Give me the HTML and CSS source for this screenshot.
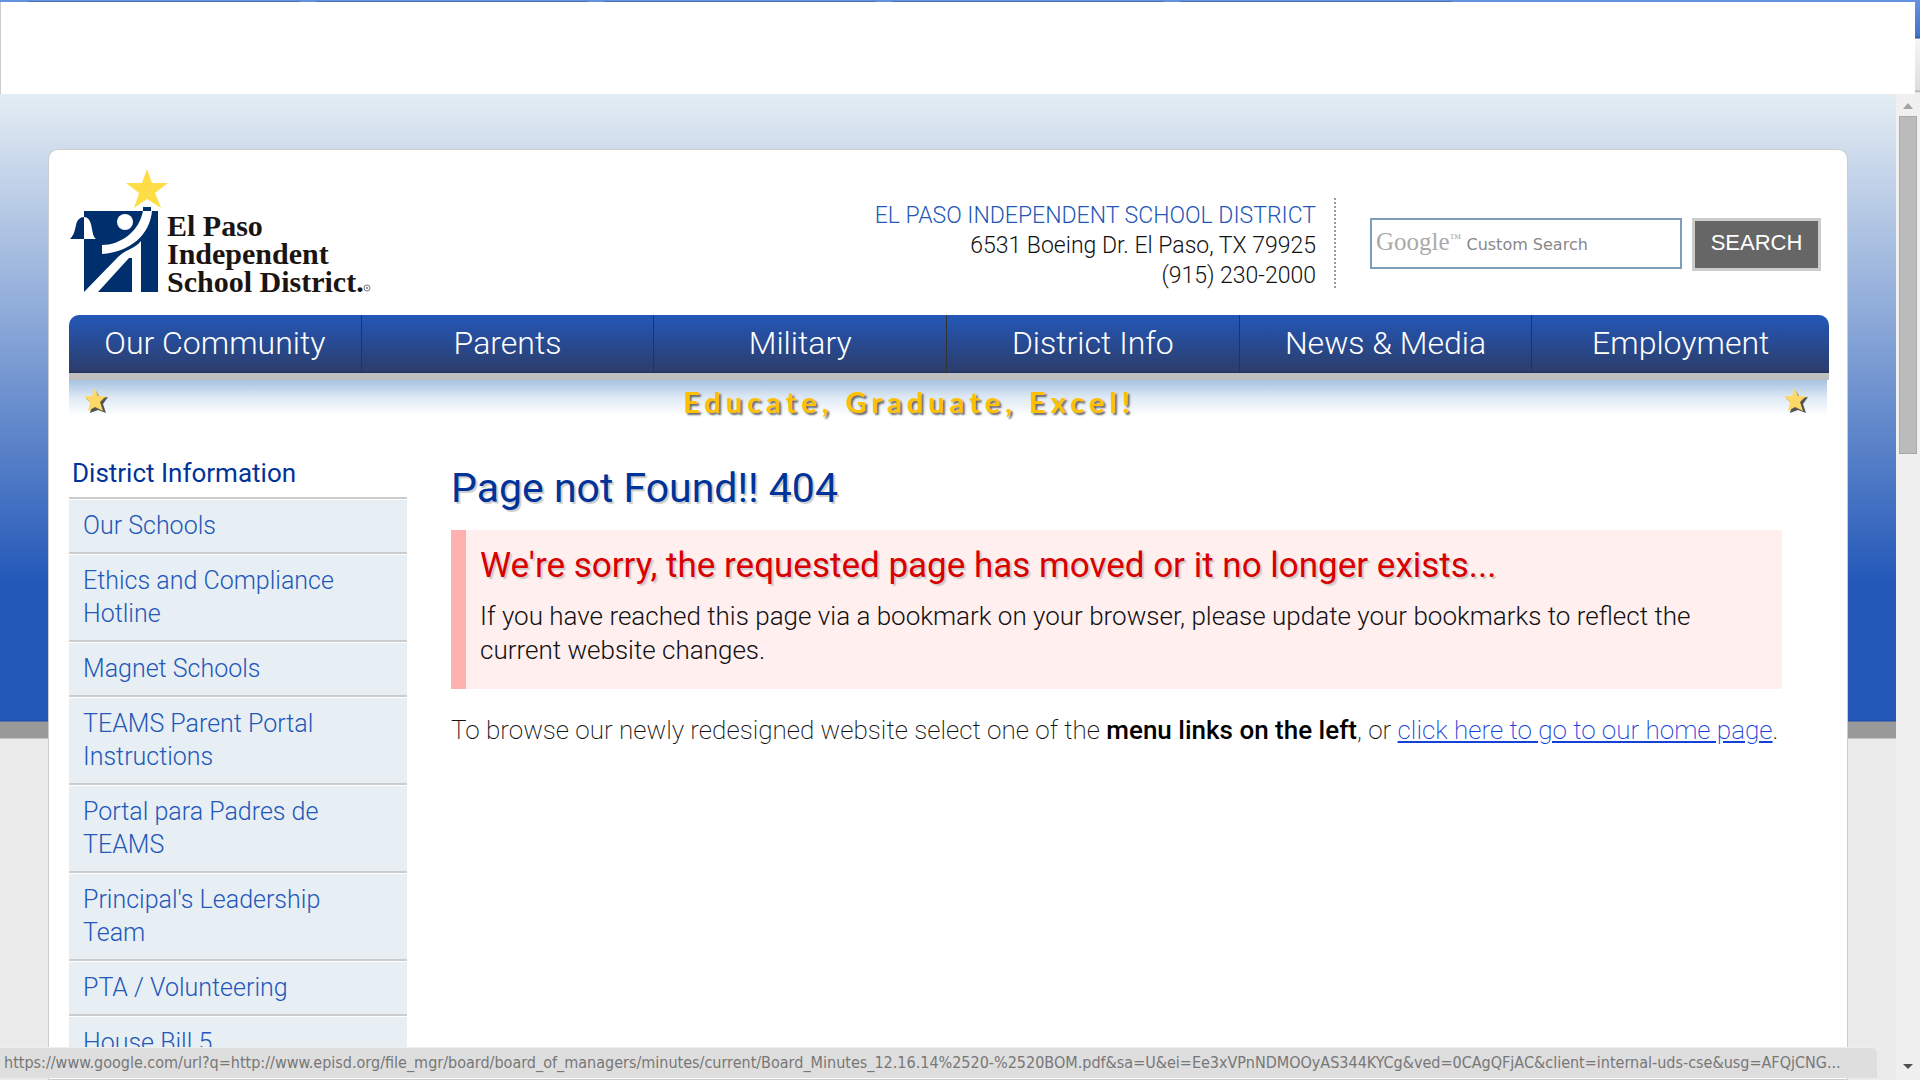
FILE: index.html
```
<!DOCTYPE html>
<html lang="en">
<head>
    <meta charset="UTF-8">
    <meta name="viewport" content="width=device-width, initial-scale=1.0">
    <title>Page not Found - El Paso Independent School District</title>
    <link rel="stylesheet" href="styles.css">
</head>
<body>
<div class="topbar">
    <div class="tabs"><span></span><span></span><span></span><span></span><span></span></div>
    <div class="topbar-row">
        <div class="blank"></div>
        <div class="edge"></div>
    </div>
</div>

<div class="window">
    <div class="page">
        <div class="container">
            <header class="header">
                <a href="#" class="logo" aria-label="El Paso Independent School District">
                    <svg width="310" height="134" viewBox="-1 0 310 134">
                        <path fill="#002f6e" d="M14 42h74v81H14z"/>
                        <path fill="#ffdd47" d="M77 0l5 14h16L85 24l6 15-14-9-13 9 5-15L56 14h16z"/>
                        <path fill="#002f6e" d="M0 70c4-4 5-9 6-14 1-5 4-8 8-8v22z"/>
                        <path fill="#fff" d="M14 48c5 0 7 5 8 12 1 5 1 7 4 10H14z"/>
                        <circle cx="55" cy="53" r="8" fill="#fff"/>
                        <path fill="#fff" d="M32 76c18 0 37-13 41-34h9c-2 23-21 41-50 43z"/>
                        <path fill="#002f6e" d="M73 38h8v4h-8z"/>
                        <path fill="#fff" d="M14 123l34-35c8-8 17-8 23-16v51h-9V89h-3l-31 34z"/>
                        <g class="logo-text">
                            <text x="97" y="67">El Paso</text>
                            <text x="97" y="95">Independent</text>
                            <text x="97" y="123">School District.</text>
                        </g>
                        <circle cx="297" cy="119" r="3" fill="none" stroke="#777"/>
                        <circle cx="297" cy="119" r="1" fill="#777"/>
                    </svg>
                </a>
                <div class="address">
                    <a href="#">EL PASO INDEPENDENT SCHOOL DISTRICT</a><br>
                    6531 Boeing Dr. El Paso, TX 79925<br>
                    (915) 230-2000
                </div>
                <form class="search">
                    <div class="search-box">
                        <input type="text" id="q" aria-label="Search">
                        <label for="q"><span class="google">Google<sup>™</sup></span> Custom Search</label>
                    </div>
                    <button type="button">SEARCH</button>
                </form>
            </header>

            <nav class="nav">
                <a href="#">Our Community</a>
                <a href="#">Parents</a>
                <a href="#">Military</a>
                <a href="#">District Info</a>
                <a href="#">News &amp; Media</a>
                <a href="#">Employment</a>
            </nav>

            <div class="tagline">
                <svg class="star" width="26" height="26" viewBox="0 0 26 26">
                    <path fill="#555" d="M13 3l4 7 8-1-5 7 3 9-8-3-8 3 2-9-6-6 7-1z"/>
                    <path fill="#ffd966" d="M12 0l3 8 8 0-6 6 3 9-8-4-7 4 2-9-6-6 8 0z"/>
                </svg>
                <span>Educate, Graduate, Excel!</span>
                <svg class="star" width="26" height="26" viewBox="0 0 26 26">
                    <path fill="#555" d="M13 3l4 7 8-1-5 7 3 9-8-3-8 3 2-9-6-6 7-1z"/>
                    <path fill="#ffd966" d="M12 0l3 8 8 0-6 6 3 9-8-4-7 4 2-9-6-6 8 0z"/>
                </svg>
            </div>

            <div class="columns">
                <aside class="sidebar">
                    <h3>District Information</h3>
                    <ul>
                        <li><a href="#">Our Schools</a></li>
                        <li><a href="#">Ethics and Compliance Hotline</a></li>
                        <li><a href="#">Magnet Schools</a></li>
                        <li><a href="#">TEAMS Parent Portal Instructions</a></li>
                        <li><a href="#">Portal para Padres de TEAMS</a></li>
                        <li><a href="#">Principal's Leadership Team</a></li>
                        <li><a href="#">PTA / Volunteering</a></li>
                        <li><a href="#">House Bill 5</a></li>
                    </ul>
                </aside>
                <main class="content">
                    <h1>Page not Found!! 404</h1>
                    <div class="alert">
                        <h2>We're sorry, the requested page has moved or it no longer exists...</h2>
                        <p>If you have reached this page via a bookmark on your browser, please update your bookmarks to reflect the current website changes.</p>
                    </div>
                    <p class="browse">To browse our newly redesigned website select one of the <strong>menu links on the left</strong>, or <a href="#">click here to go to our home page</a>.</p>
                </main>
            </div>
        </div>
    </div>

    <div class="scrollbar">
        <svg width="24" height="22" viewBox="0 0 24 22"><path fill="#a3a3a3" d="M7 15h10l-5-6z"/></svg>
        <div class="thumb"></div>
        <svg width="24" height="22" viewBox="0 0 24 22"><path fill="#505050" d="M7 6h10l-5 5z"/></svg>
    </div>
</div>

<div class="status">https://www.google.com/url?q=http://www.episd.org/file_mgr/board/board_of_managers/minutes/current/Board_Minutes_12.16.14%2520-%2520BOM.pdf&amp;sa=U&amp;ei=Ee3xVPnNDMOOyAS344KYCg&amp;ved=0CAgQFjAC&amp;client=internal-uds-cse&amp;usg=AFQjCNG...</div>
</body>
</html>
```
FILE: styles.css
```
* { box-sizing: border-box; }
body {
    margin: 0;
    height: 100vh;
    overflow: hidden;
    display: flex;
    flex-direction: column;
    font-family: Roboto, Arial, sans-serif;
    font-weight: 300;
    font-size: 26px;
    line-height: 34px;
    color: #111;
}
a { color: #2358b8; text-decoration: none; }
h1, h2, h3, p, ul { margin: 0; padding: 0; }
h1, h2, h3 { font-weight: 400; }

/* Browser chrome */
.topbar { height: 94px; display: flex; flex-direction: column; background: #fff; }
.tabs { height: 2px; background: #6492e0; display: flex; gap: 16px; padding-left: 28px; }
.tabs span { width: 272px; border-bottom: 1px solid #4a72b4; }
.topbar-row { flex: 1; display: flex; border-left: 1px solid #ccc; }
.blank { flex: 1; }
.edge {
    width: 5px;
    background: linear-gradient(#6492e0, #4273cc 34px, #2a50a0 36px, #f6f6f6 37px, #ddd 88px, #aaa 89px, #f0f0f0 91px);
}
.window { flex: 1; min-height: 0; display: flex; }
.scrollbar {
    width: 24px;
    background: #f0f0f0;
    display: flex;
    flex-direction: column;
}
.scrollbar svg { display: block; flex: none; }
.thumb { width: 18px; height: 338px; margin: 0 3px auto; background: #bbb; border: 1px solid #a8a8a8; }

.page {
    flex: 1;
    overflow: hidden;
    padding: 55px 48px 0;
    background: linear-gradient(#e4edf3, #2358b8 490px, #2358b8 626px, #1d4fb0 627px, #999 628px, #999 644px, #ebebeb 645px);
}
.container {
    min-height: 100%;
    padding: 19px 20px 0;
    background: #fff;
    border: 1px solid #ccc;
    border-radius: 10px 10px 0 0;
}

.header { display: flex; align-items: flex-start; height: 146px; padding-right: 6px; }
.logo { margin-right: auto; }
.logo svg { display: block; }
.logo-text { font: bold 30px "Liberation Serif", serif; fill: #1a1412; }
.address {
    margin-top: 29px;
    height: 90px;
    padding: 3px 18px 0 0;
    border-right: 2px dotted #999;
    font-size: 23px;
    line-height: 30px;
    text-align: right;
}
.search { display: flex; gap: 10px; margin: 49px 0 0 34px; }
.search-box { display: grid; width: 312px; height: 51px; }
.search-box input, .search-box label { grid-area: 1 / 1; }
.search-box input { min-width: 0; border: 2px solid #7e9db9; background: #fff; }
.search-box label {
    padding-left: 6px;
    line-height: 48px;
    font-family: "DejaVu Sans", sans-serif;
    font-size: 16px;
    font-weight: 400;
    color: #888;
    pointer-events: none;
    white-space: nowrap;
}
.google { font-family: "Liberation Serif", serif; font-size: 25px; color: #aaa; }
.google sup { font-size: 12px; line-height: 0; vertical-align: 8px; }
.search button {
    width: 129px;
    height: 53px;
    padding: 0 0 4px;
    border: 3px solid #ccc;
    background: #666;
    color: #fff;
    font-family: "Liberation Sans", Arial, sans-serif;
    font-size: 22px;
}

.nav {
    display: flex;
    height: 65px;
    margin-right: -2px;
    border-bottom: 7px solid #bfbfbf;
    border-radius: 10px 10px 0 0;
    background: linear-gradient(#2358b8, #2c3d6c 56px, #22325f);
}
.nav a {
    flex: 1;
    color: #fff;
    font-size: 32px;
    line-height: 56px;
    text-align: center;
    border-right: 1px solid #333;
}
.nav a:last-child { flex-basis: 5px; border-right: 0; }

.tagline {
    display: flex;
    align-items: flex-start;
    height: 74px;
    padding: 8px 18px 0 14px;
    background: linear-gradient(#a5c3e2, #e0eaf5 18px, #fff 36px);
}
.tagline span {
    flex: 1;
    padding-right: 74px;
    text-align: center;
    font-family: Lato, sans-serif;
    font-size: 29px;
    font-weight: 700;
    line-height: 28px;
    letter-spacing: 5px;
    color: #ffc000;
    text-shadow: 2px 2px 2px #666;
}

.columns { display: flex; gap: 44px; padding-right: 45px; }
.sidebar { width: 338px; flex: none; }
.sidebar h3 { padding: 2px 3px 7px; font-size: 26px; color: #039; }
.sidebar ul { list-style: none; }
.sidebar li {
    padding: 10px 60px 10px 14px;
    border-top: 2px solid #ccc;
    background: #e7eff5;
    box-shadow: inset 0 1px #fff;
    font-size: 25px;
    line-height: 33px;
}
.content { flex: 1; padding-top: 7px; }
.content h1 {
    font-size: 41px;
    line-height: 54px;
    color: #039;
    text-shadow: 2px 2px 1px #ccc;
}
.alert {
    margin: 15px 0 24px;
    padding: 16px 14px 22px;
    border-left: 15px solid #ffb0b0;
    background: #ffefef;
}
.alert h2 {
    margin-bottom: 13px;
    font-size: 35px;
    line-height: 40px;
    color: #d90000;
    text-shadow: 2px 2px 1px #ccc;
}
.browse { font-weight: 200; }
.content strong { font-weight: 500; color: #000; }
.content a { color: #1441d8; text-decoration: underline; }

.status {
    position: absolute;
    left: 0;
    bottom: 2px;
    height: 31px;
    padding: 0 36px 0 4px;
    background: #dedede;
    border-top: 1px solid #eee;
    border-radius: 0 6px 0 0;
    font: 16px/30px "DejaVu Sans Condensed", "Noto Sans", sans-serif;
    color: #777;
    white-space: nowrap;
}
```
